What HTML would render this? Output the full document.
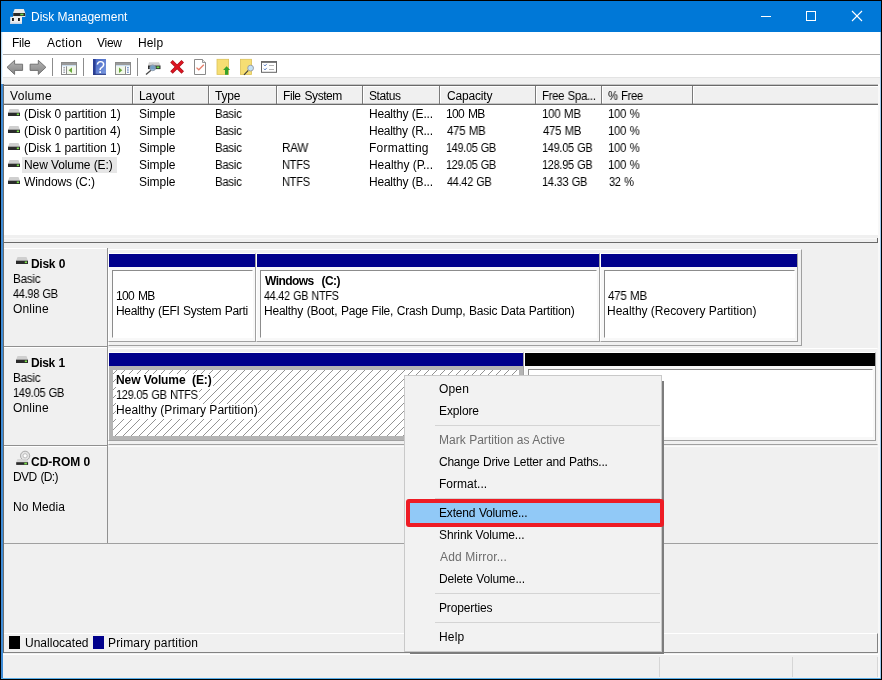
<!DOCTYPE html>
<html><head><meta charset="utf-8"><title>Disk Management</title>
<style>
html,body{margin:0;padding:0;}
body{width:882px;height:680px;overflow:hidden;background:#f0f0f0;position:relative;font-family:"Liberation Sans", Arial, sans-serif;font-size:12px;color:#000;}
.r{position:absolute;box-sizing:border-box;}
.t{position:absolute;white-space:pre;line-height:16px;height:16px;will-change:transform;}
svg{position:absolute;overflow:visible;}
</style></head><body>
<div class="r" style="left:0px;top:0px;width:882px;height:680px;background:#000;"></div>
<div class="r" style="left:1px;top:1px;width:880px;height:678px;background:#0078d7;"></div>
<div class="r" style="left:3px;top:32px;width:877px;height:646px;background:#f0f0f0;"></div>
<div class="r" style="left:880px;top:32px;width:1px;height:646px;background:#9ccbf0;"></div>
<div class="r" style="left:1px;top:32px;width:1px;height:52px;background:#b5d9f5;"></div>
<div class="r" style="left:2px;top:32px;width:1px;height:52px;background:#eef6fd;"></div>
<div class="r" style="left:1px;top:84px;width:2px;height:594px;background:#3f8cd6;"></div>
<div class="r" style="left:1px;top:678px;width:880px;height:1px;background:#5aaee8;"></div>
<span class="t" style="left:30.7px;top:9px;font-size:12px;letter-spacing:-0.025px;color:#fff;">Disk Management</span>
<svg style="left:755px;top:5px" width="120" height="22" viewBox="755 5 120 22"><g stroke="#fff" stroke-width="1" fill="none" shape-rendering="crispEdges"><line x1="761" y1="16.5" x2="771" y2="16.5"/><rect x="806.5" y="11.5" width="9" height="9"/></g><g stroke="#fff" stroke-width="1.1" fill="none"><line x1="852" y1="11" x2="862" y2="21"/><line x1="862" y1="11" x2="852" y2="21"/></g></svg>
<div class="r" style="left:3px;top:32px;width:877px;height:22px;background:#fff;"></div>
<div class="r" style="left:3px;top:54px;width:877px;height:1px;background:#a8a8a8;"></div>
<span class="t" style="left:12.0px;top:35px;font-size:12px;letter-spacing:-0.209px;">File</span>
<span class="t" style="left:46.5px;top:35px;font-size:12px;letter-spacing:0.309px;">Action</span>
<span class="t" style="left:96.9px;top:35px;font-size:12px;letter-spacing:-0.258px;">View</span>
<span class="t" style="left:138.2px;top:35px;font-size:12px;letter-spacing:0.134px;">Help</span>
<div class="r" style="left:3px;top:55px;width:877px;height:22px;background:#fff;"></div>
<div class="r" style="left:3px;top:77px;width:877px;height:1px;background:#e3e3e3;"></div>
<div class="r" style="left:3px;top:84px;width:875px;height:151px;background:#fff;border-left:1px solid #6d6d6d;"></div>
<div class="r" style="left:4px;top:84px;width:874px;height:21px;background:#f0f0f0;"></div>
<div class="r" style="left:4px;top:84px;width:874px;height:1px;background:#c4c4c4;"></div>
<div class="r" style="left:4px;top:85px;width:874px;height:1px;background:#6a6a6a;"></div>
<div class="r" style="left:4px;top:86px;width:874px;height:1px;background:#fff;"></div>
<div class="r" style="left:4px;top:103px;width:874px;height:1px;background:#c4c4c4;"></div>
<div class="r" style="left:4px;top:104px;width:874px;height:1px;background:#6a6a6a;"></div>
<div class="r" style="left:132px;top:86px;width:1px;height:18px;background:#7a7a7a;"></div>
<div class="r" style="left:133px;top:86px;width:1px;height:17px;background:#fff;"></div>
<div class="r" style="left:208px;top:86px;width:1px;height:18px;background:#7a7a7a;"></div>
<div class="r" style="left:209px;top:86px;width:1px;height:17px;background:#fff;"></div>
<div class="r" style="left:276px;top:86px;width:1px;height:18px;background:#7a7a7a;"></div>
<div class="r" style="left:277px;top:86px;width:1px;height:17px;background:#fff;"></div>
<div class="r" style="left:362px;top:86px;width:1px;height:18px;background:#7a7a7a;"></div>
<div class="r" style="left:363px;top:86px;width:1px;height:17px;background:#fff;"></div>
<div class="r" style="left:439px;top:86px;width:1px;height:18px;background:#7a7a7a;"></div>
<div class="r" style="left:440px;top:86px;width:1px;height:17px;background:#fff;"></div>
<div class="r" style="left:535px;top:86px;width:1px;height:18px;background:#7a7a7a;"></div>
<div class="r" style="left:536px;top:86px;width:1px;height:17px;background:#fff;"></div>
<div class="r" style="left:601px;top:86px;width:1px;height:18px;background:#7a7a7a;"></div>
<div class="r" style="left:602px;top:86px;width:1px;height:17px;background:#fff;"></div>
<div class="r" style="left:692px;top:86px;width:1px;height:18px;background:#7a7a7a;"></div>
<div class="r" style="left:693px;top:86px;width:1px;height:17px;background:#fff;"></div>
<span class="t" style="left:9.9px;top:88px;font-size:12px;letter-spacing:0.311px;">Volume</span>
<span class="t" style="left:139.0px;top:88px;font-size:12px;letter-spacing:-0.072px;">Layout</span>
<span class="t" style="left:215.2px;top:88px;font-size:12px;letter-spacing:-0.238px;">Type</span>
<span class="t" style="left:282.7px;top:88px;font-size:12px;letter-spacing:-0.431px;word-spacing:0.99px;">File System</span>
<span class="t" style="left:369.1px;top:88px;font-size:12px;letter-spacing:-0.411px;">Status</span>
<span class="t" style="left:446.6px;top:88px;font-size:12px;letter-spacing:-0.179px;">Capacity</span>
<span class="t" style="left:542.1px;top:88px;font-size:12px;letter-spacing:-0.300px;word-spacing:0.60px;transform:scaleX(0.9473);transform-origin:0 0;">Free Spa...</span>
<span class="t" style="left:608.3px;top:88px;font-size:12px;letter-spacing:-0.300px;word-spacing:0.60px;transform:scaleX(0.9314);transform-origin:0 0;">% Free</span>
<div class="r" style="left:22px;top:157px;width:95px;height:16px;background:#e6e6e6;"></div>
<span class="t" style="left:23.8px;top:106px;font-size:12px;letter-spacing:-0.036px;">(Disk 0 partition 1)</span>
<span class="t" style="left:138.7px;top:106px;font-size:12px;letter-spacing:-0.042px;">Simple</span>
<span class="t" style="left:214.6px;top:106px;font-size:12px;letter-spacing:-0.300px;transform:scaleX(0.9500);transform-origin:0 0;">Basic</span>
<span class="t" style="left:368.5px;top:106px;font-size:12px;letter-spacing:-0.214px;word-spacing:0.51px;">Healthy (E...</span>
<span class="t" style="left:446.3px;top:106px;font-size:12px;letter-spacing:-0.642px;word-spacing:1.20px;">100 MB</span>
<span class="t" style="left:542.1px;top:106px;font-size:12px;letter-spacing:-0.300px;word-spacing:0.60px;transform:scaleX(0.9637);transform-origin:0 0;">100 MB</span>
<span class="t" style="left:608.1px;top:106px;font-size:12px;letter-spacing:-0.300px;word-spacing:0.60px;transform:scaleX(0.9505);transform-origin:0 0;">100 %</span>
<svg style="left:8px;top:109px" width="12" height="7" viewBox="0 0 12 7"><path d="M1.5 0H10.5L12 4H0Z" fill="#cfcfcf"/><rect x="0" y="3.7" width="12" height="3.3" fill="#2b2b2b"/><rect x="8.8" y="4.5" width="2.2" height="1.6" fill="#7be04a"/></svg>
<span class="t" style="left:23.8px;top:123px;font-size:12px;letter-spacing:-0.036px;">(Disk 0 partition 4)</span>
<span class="t" style="left:138.7px;top:123px;font-size:12px;letter-spacing:-0.042px;">Simple</span>
<span class="t" style="left:214.6px;top:123px;font-size:12px;letter-spacing:-0.300px;transform:scaleX(0.9500);transform-origin:0 0;">Basic</span>
<span class="t" style="left:368.5px;top:123px;font-size:12px;letter-spacing:-0.282px;word-spacing:0.68px;">Healthy (R...</span>
<span class="t" style="left:446.9px;top:123px;font-size:12px;letter-spacing:-0.300px;word-spacing:0.60px;transform:scaleX(0.9557);transform-origin:0 0;">475 MB</span>
<span class="t" style="left:542.7px;top:123px;font-size:12px;letter-spacing:-0.300px;word-spacing:0.60px;transform:scaleX(0.9481);transform-origin:0 0;">475 MB</span>
<span class="t" style="left:608.1px;top:123px;font-size:12px;letter-spacing:-0.300px;word-spacing:0.60px;transform:scaleX(0.9505);transform-origin:0 0;">100 %</span>
<svg style="left:8px;top:126px" width="12" height="7" viewBox="0 0 12 7"><path d="M1.5 0H10.5L12 4H0Z" fill="#cfcfcf"/><rect x="0" y="3.7" width="12" height="3.3" fill="#2b2b2b"/><rect x="8.8" y="4.5" width="2.2" height="1.6" fill="#7be04a"/></svg>
<span class="t" style="left:23.8px;top:140px;font-size:12px;letter-spacing:-0.036px;">(Disk 1 partition 1)</span>
<span class="t" style="left:138.7px;top:140px;font-size:12px;letter-spacing:-0.042px;">Simple</span>
<span class="t" style="left:214.6px;top:140px;font-size:12px;letter-spacing:-0.300px;transform:scaleX(0.9500);transform-origin:0 0;">Basic</span>
<span class="t" style="left:282.2px;top:140px;font-size:12px;letter-spacing:-0.300px;transform:scaleX(0.9793);transform-origin:0 0;">RAW</span>
<span class="t" style="left:368.5px;top:140px;font-size:12px;letter-spacing:0.244px;">Formatting</span>
<span class="t" style="left:446.4px;top:140px;font-size:12px;letter-spacing:-0.300px;word-spacing:0.60px;transform:scaleX(0.9032);transform-origin:0 0;">149.05 GB</span>
<span class="t" style="left:542.2px;top:140px;font-size:12px;letter-spacing:-0.300px;word-spacing:0.60px;transform:scaleX(0.9125);transform-origin:0 0;">149.05 GB</span>
<span class="t" style="left:608.1px;top:140px;font-size:12px;letter-spacing:-0.300px;word-spacing:0.60px;transform:scaleX(0.9505);transform-origin:0 0;">100 %</span>
<svg style="left:8px;top:143px" width="12" height="7" viewBox="0 0 12 7"><path d="M1.5 0H10.5L12 4H0Z" fill="#cfcfcf"/><rect x="0" y="3.7" width="12" height="3.3" fill="#2b2b2b"/><rect x="8.8" y="4.5" width="2.2" height="1.6" fill="#7be04a"/></svg>
<span class="t" style="left:23.5px;top:157px;font-size:12px;letter-spacing:-0.093px;">New Volume (E:)</span>
<span class="t" style="left:138.7px;top:157px;font-size:12px;letter-spacing:-0.042px;">Simple</span>
<span class="t" style="left:214.6px;top:157px;font-size:12px;letter-spacing:-0.300px;transform:scaleX(0.9500);transform-origin:0 0;">Basic</span>
<span class="t" style="left:282.3px;top:157px;font-size:12px;letter-spacing:-0.300px;transform:scaleX(0.9201);transform-origin:0 0;">NTFS</span>
<span class="t" style="left:368.5px;top:157px;font-size:12px;letter-spacing:-0.042px;">Healthy (P...</span>
<span class="t" style="left:446.4px;top:157px;font-size:12px;letter-spacing:-0.300px;word-spacing:0.60px;transform:scaleX(0.9032);transform-origin:0 0;">129.05 GB</span>
<span class="t" style="left:542.2px;top:157px;font-size:12px;letter-spacing:-0.300px;word-spacing:0.60px;transform:scaleX(0.9125);transform-origin:0 0;">128.95 GB</span>
<span class="t" style="left:608.1px;top:157px;font-size:12px;letter-spacing:-0.300px;word-spacing:0.60px;transform:scaleX(0.9505);transform-origin:0 0;">100 %</span>
<svg style="left:8px;top:160px" width="12" height="7" viewBox="0 0 12 7"><path d="M1.5 0H10.5L12 4H0Z" fill="#cfcfcf"/><rect x="0" y="3.7" width="12" height="3.3" fill="#2b2b2b"/><rect x="8.8" y="4.5" width="2.2" height="1.6" fill="#7be04a"/></svg>
<span class="t" style="left:24.4px;top:174px;font-size:12px;letter-spacing:-0.102px;">Windows (C:)</span>
<span class="t" style="left:138.7px;top:174px;font-size:12px;letter-spacing:-0.042px;">Simple</span>
<span class="t" style="left:214.6px;top:174px;font-size:12px;letter-spacing:-0.300px;transform:scaleX(0.9500);transform-origin:0 0;">Basic</span>
<span class="t" style="left:282.3px;top:174px;font-size:12px;letter-spacing:-0.300px;transform:scaleX(0.9201);transform-origin:0 0;">NTFS</span>
<span class="t" style="left:368.5px;top:174px;font-size:12px;letter-spacing:-0.214px;word-spacing:0.51px;">Healthy (B...</span>
<span class="t" style="left:447.0px;top:174px;font-size:12px;letter-spacing:-0.300px;word-spacing:0.60px;transform:scaleX(0.9069);transform-origin:0 0;">44.42 GB</span>
<span class="t" style="left:542.2px;top:174px;font-size:12px;letter-spacing:-0.300px;word-spacing:0.60px;transform:scaleX(0.9212);transform-origin:0 0;">14.33 GB</span>
<span class="t" style="left:608.6px;top:174px;font-size:12px;letter-spacing:-0.300px;word-spacing:0.60px;transform:scaleX(0.9169);transform-origin:0 0;">32 %</span>
<svg style="left:8px;top:177px" width="12" height="7" viewBox="0 0 12 7"><path d="M1.5 0H10.5L12 4H0Z" fill="#cfcfcf"/><rect x="0" y="3.7" width="12" height="3.3" fill="#2b2b2b"/><rect x="8.8" y="4.5" width="2.2" height="1.6" fill="#7be04a"/></svg>
<div class="r" style="left:878px;top:84px;width:2px;height:594px;background:#f8f8f8;"></div>
<div class="r" style="left:3px;top:235px;width:875px;height:7px;background:#f0f0f0;"></div>
<div class="r" style="left:4px;top:238px;width:873px;height:1px;background:#f8f8f8;"></div>
<div class="r" style="left:3px;top:242px;width:875px;height:1px;background:#696969;"></div>
<div class="r" style="left:877px;top:238px;width:1px;height:5px;background:#696969;"></div>
<div class="r" style="left:3px;top:84px;width:1px;height:569px;background:#6d6d6d;"></div>
<div class="r" style="left:4px;top:248px;width:103px;height:98px;background:#f0f0f0;border-top:1px solid #fff;"></div>
<div class="r" style="left:107px;top:248px;width:1px;height:99px;background:#909090;"></div>
<div class="r" style="left:4px;top:346px;width:104px;height:1px;background:#909090;"></div>
<div class="r" style="left:4px;top:347px;width:103px;height:98px;background:#f0f0f0;border-top:1px solid #fff;"></div>
<div class="r" style="left:107px;top:347px;width:1px;height:99px;background:#909090;"></div>
<div class="r" style="left:4px;top:445px;width:104px;height:1px;background:#909090;"></div>
<div class="r" style="left:4px;top:446px;width:103px;height:97px;background:#f0f0f0;border-top:1px solid #fff;"></div>
<div class="r" style="left:107px;top:446px;width:1px;height:98px;background:#909090;"></div>
<div class="r" style="left:4px;top:543px;width:104px;height:1px;background:#909090;"></div>
<div class="r" style="left:4px;top:543px;width:874px;height:1px;background:#a0a0a0;"></div>
<svg style="left:16px;top:257px" width="12" height="7" viewBox="0 0 12 7"><path d="M1.5 0H10.5L12 4H0Z" fill="#cfcfcf"/><rect x="0" y="3.7" width="12" height="3.3" fill="#2b2b2b"/><rect x="8.8" y="4.5" width="2.2" height="1.6" fill="#7be04a"/></svg>
<svg style="left:16px;top:356px" width="12" height="7" viewBox="0 0 12 7"><path d="M1.5 0H10.5L12 4H0Z" fill="#cfcfcf"/><rect x="0" y="3.7" width="12" height="3.3" fill="#2b2b2b"/><rect x="8.8" y="4.5" width="2.2" height="1.6" fill="#7be04a"/></svg>
<span class="t" style="left:31.0px;top:256px;font-size:12px;letter-spacing:-0.309px;word-spacing:0.58px;font-weight:700;">Disk 0</span>
<span class="t" style="left:12.5px;top:271px;font-size:12px;letter-spacing:-0.300px;transform:scaleX(0.9760);transform-origin:0 0;">Basic</span>
<span class="t" style="left:13.2px;top:286px;font-size:12px;letter-spacing:-0.300px;word-spacing:0.60px;transform:scaleX(0.9131);transform-origin:0 0;">44.98 GB</span>
<span class="t" style="left:12.9px;top:301px;font-size:12px;letter-spacing:0.183px;">Online</span>
<span class="t" style="left:31.0px;top:355px;font-size:12px;letter-spacing:-0.359px;word-spacing:0.67px;font-weight:700;">Disk 1</span>
<span class="t" style="left:12.5px;top:370px;font-size:12px;letter-spacing:-0.300px;transform:scaleX(0.9760);transform-origin:0 0;">Basic</span>
<span class="t" style="left:12.7px;top:385px;font-size:12px;letter-spacing:-0.300px;word-spacing:0.60px;transform:scaleX(0.9254);transform-origin:0 0;">149.05 GB</span>
<span class="t" style="left:12.9px;top:400px;font-size:12px;letter-spacing:0.183px;">Online</span>
<span class="t" style="left:31.3px;top:454px;font-size:12px;letter-spacing:-0.023px;font-weight:700;">CD-ROM 0</span>
<span class="t" style="left:12.5px;top:469px;font-size:12px;letter-spacing:-0.620px;word-spacing:1.20px;">DVD (D:)</span>
<span class="t" style="left:12.5px;top:499px;font-size:12px;letter-spacing:0.075px;">No Media</span>
<div class="r" style="left:108px;top:249px;width:694px;height:97px;background:#f0f0f0;border:1px solid #fff;border-right-color:#a0a0a0;border-bottom-color:#a0a0a0;"></div>
<div class="r" style="left:108px;top:253px;width:148px;height:89px;background:#f8f8f8;border:1px solid #fff;border-right-color:#a0a0a0;border-bottom-color:#a0a0a0;"></div>
<div class="r" style="left:109px;top:254px;width:146px;height:13px;background:#00008b;"></div>
<div class="r" style="left:112px;top:270px;width:141px;height:68px;background:#fff;border:1px solid #8c8c8c;border-right-color:#fff;border-bottom-color:#fff;"></div>
<div class="r" style="left:256px;top:253px;width:344px;height:89px;background:#f8f8f8;border:1px solid #fff;border-right-color:#a0a0a0;border-bottom-color:#a0a0a0;"></div>
<div class="r" style="left:257px;top:254px;width:342px;height:13px;background:#00008b;"></div>
<div class="r" style="left:260px;top:270px;width:337px;height:68px;background:#fff;border:1px solid #8c8c8c;border-right-color:#fff;border-bottom-color:#fff;"></div>
<div class="r" style="left:600px;top:253px;width:198px;height:89px;background:#f8f8f8;border:1px solid #fff;border-right-color:#a0a0a0;border-bottom-color:#a0a0a0;"></div>
<div class="r" style="left:601px;top:254px;width:196px;height:13px;background:#00008b;"></div>
<div class="r" style="left:604px;top:270px;width:191px;height:68px;background:#fff;border:1px solid #8c8c8c;border-right-color:#fff;border-bottom-color:#fff;"></div>
<div class="r" style="left:108px;top:348px;width:770px;height:97px;background:#f0f0f0;border:1px solid #fff;border-right-color:#f4f4f4;border-bottom-color:#a0a0a0;"></div>
<div class="r" style="left:108px;top:352px;width:416px;height:89px;background:#f8f8f8;border:1px solid #fff;border-right-color:#a0a0a0;border-bottom-color:#a0a0a0;"></div>
<div class="r" style="left:109px;top:353px;width:414px;height:13px;background:#00008b;"></div>
<div class="r" style="left:109px;top:366px;width:414px;height:74px;background:#fff;border:4px solid #b4b4b4;"></div>
<div class="r" style="left:524px;top:352px;width:352px;height:89px;background:#f8f8f8;border:1px solid #fff;border-right-color:#a0a0a0;border-bottom-color:#a0a0a0;"></div>
<div class="r" style="left:525px;top:353px;width:350px;height:13px;background:#000;"></div>
<div class="r" style="left:528px;top:369px;width:345px;height:68px;background:#fff;border:1px solid #8c8c8c;border-right-color:#fff;border-bottom-color:#fff;"></div>
<svg style="left:113px;top:370px" width="406" height="66"><defs><pattern id="h" width="8" height="8" patternUnits="userSpaceOnUse"><path d="M-1 5L5 -1M3 9L9 3" stroke="#808080" stroke-width="0.85" fill="none"/></pattern></defs><rect width="406" height="66" fill="url(#h)"/></svg>
<span class="t" style="left:115.9px;top:288px;font-size:12px;letter-spacing:-0.643px;word-spacing:1.20px;">100 MB</span>
<div class="r" style="left:113px;top:302px;width:135px;height:18px;overflow:hidden">
<span class="t" style="left:2.8px;top:1px;font-size:12px;letter-spacing:-0.335px;word-spacing:0.73px;">Healthy (EFI System Partition)</span>
</div>
<span class="t" style="left:264.5px;top:273px;font-size:12px;letter-spacing:-0.558px;word-spacing:1.12px;font-weight:700;">Windows  (C:)</span>
<span class="t" style="left:264.3px;top:288px;font-size:12px;letter-spacing:-0.300px;word-spacing:0.60px;transform:scaleX(0.9020);transform-origin:0 0;">44.42 GB NTFS</span>
<span class="t" style="left:263.5px;top:303px;font-size:12px;letter-spacing:-0.229px;word-spacing:0.49px;">Healthy (Boot, Page File, Crash Dump, Basic Data Partition)</span>
<span class="t" style="left:608.1px;top:288px;font-size:12px;letter-spacing:-0.300px;word-spacing:0.60px;transform:scaleX(0.9658);transform-origin:0 0;">475 MB</span>
<span class="t" style="left:607.2px;top:303px;font-size:12px;letter-spacing:-0.020px;">Healthy (Recovery Partition)</span>
<div class="r" style="left:116px;top:374px;width:96.5px;height:15px;background:#fff;"></div>
<div class="r" style="left:116px;top:389px;width:82.5px;height:15px;background:#fff;"></div>
<div class="r" style="left:116px;top:404px;width:141.5px;height:15px;background:#fff;"></div>
<span class="t" style="left:115.9px;top:372px;font-size:12px;letter-spacing:-0.095px;font-weight:700;">New Volume  (E:)</span>
<span class="t" style="left:115.9px;top:387px;font-size:12px;letter-spacing:-0.300px;word-spacing:0.60px;transform:scaleX(0.9171);transform-origin:0 0;">129.05 GB NTFS</span>
<span class="t" style="left:115.7px;top:402px;font-size:12px;letter-spacing:0.039px;">Healthy (Primary Partition)</span>
<div class="r" style="left:4px;top:633px;width:874px;height:20px;background:#f0f0f0;border-top:1px solid #fff;border-bottom:1px solid #828282;border-right:1px solid #828282;"></div>
<div class="r" style="left:9px;top:636px;width:11px;height:13px;background:#000;"></div>
<div class="r" style="left:93px;top:636px;width:11px;height:13px;background:#00008b;"></div>
<span class="t" style="left:24.6px;top:635px;font-size:12px;letter-spacing:0.012px;">Unallocated</span>
<span class="t" style="left:108.3px;top:635px;font-size:12px;letter-spacing:0.163px;">Primary partition</span>
<div class="r" style="left:3px;top:653px;width:875px;height:1px;background:#f0f0f0;"></div>
<div class="r" style="left:3px;top:654px;width:875px;height:1px;background:#fff;"></div>
<div class="r" style="left:3px;top:655px;width:875px;height:23px;background:#f0f0f0;"></div>
<div class="r" style="left:108px;top:446px;width:770px;height:1px;background:#fbfbfb;"></div>
<div class="r" style="left:662px;top:381px;width:2px;height:273px;background:#7d7d7d;"></div>
<div class="r" style="left:410px;top:652px;width:254px;height:2px;background:#7d7d7d;"></div>
<div class="r" style="left:404px;top:375px;width:258px;height:277px;background:#f2f2f2;border:1px solid #c9c9c9;"></div>
<div class="r" style="left:435px;top:425px;width:225px;height:1px;background:#d4d4d4;"></div>
<div class="r" style="left:435px;top:498px;width:225px;height:1px;background:#d4d4d4;"></div>
<div class="r" style="left:435px;top:593px;width:225px;height:1px;background:#d4d4d4;"></div>
<div class="r" style="left:435px;top:622px;width:225px;height:1px;background:#d4d4d4;"></div>
<div class="r" style="left:410px;top:503px;width:250px;height:20px;background:#91c9f7;"></div>
<div class="r" style="left:406px;top:499px;width:258px;height:28px;background:transparent;border:4px solid #ee1c25;border-radius:3px;"></div>
<span class="t" style="left:438.9px;top:381px;font-size:12px;letter-spacing:0.163px;">Open</span>
<span class="t" style="left:438.5px;top:403px;font-size:12px;letter-spacing:-0.112px;">Explore</span>
<span class="t" style="left:438.5px;top:432px;font-size:12px;letter-spacing:0.027px;color:#6d6d6d;">Mark Partition as Active</span>
<span class="t" style="left:438.9px;top:454px;font-size:12px;letter-spacing:-0.267px;word-spacing:0.58px;">Change Drive Letter and Paths...</span>
<span class="t" style="left:438.5px;top:476px;font-size:12px;letter-spacing:0.008px;">Format...</span>
<span class="t" style="left:438.5px;top:505px;font-size:12px;letter-spacing:-0.172px;word-spacing:0.43px;">Extend Volume...</span>
<span class="t" style="left:439.0px;top:527px;font-size:12px;letter-spacing:-0.116px;">Shrink Volume...</span>
<span class="t" style="left:439.5px;top:549px;font-size:12px;letter-spacing:0.130px;color:#6d6d6d;">Add Mirror...</span>
<span class="t" style="left:438.5px;top:571px;font-size:12px;letter-spacing:-0.159px;word-spacing:0.40px;">Delete Volume...</span>
<span class="t" style="left:438.5px;top:600px;font-size:12px;letter-spacing:-0.132px;">Properties</span>
<span class="t" style="left:438.5px;top:629px;font-size:12px;letter-spacing:0.167px;">Help</span>
<svg style="left:0;top:55px;will-change:transform" width="290" height="23" viewBox="0 55 290 23">
<defs><linearGradient id="ga" x1="0" y1="0" x2="0" y2="1"><stop offset="0" stop-color="#b4b4b4"/><stop offset="1" stop-color="#858585"/></linearGradient>
<linearGradient id="gh" x1="0" y1="0" x2="1" y2="1"><stop offset="0" stop-color="#3f5fc0"/><stop offset="1" stop-color="#7d9be0"/></linearGradient></defs>
<path d="M7 67.3L14.6 60.3V64.2H22.6V70.4H14.6V74.4Z" fill="url(#ga)" stroke="#6a6a6a" stroke-width="0.9" stroke-linejoin="round"/>
<path d="M45.9 67.3L38.3 60.3V64.2H30.1V70.4H38.3V74.4Z" fill="url(#ga)" stroke="#6a6a6a" stroke-width="0.9" stroke-linejoin="round"/>
<g fill="#8c8c8c"><rect x="52" y="58" width="1" height="18"/><rect x="83" y="58" width="1" height="18"/><rect x="137" y="58" width="1" height="18"/></g>
<!-- show/hide tree -->
<g><rect x="61.5" y="62.5" width="15" height="12" fill="#fff" stroke="#8a8a8a"/><rect x="62" y="63" width="14" height="2.2" fill="#9a9a9a"/><rect x="62" y="65.3" width="14" height="1" fill="#bcd6ee"/><rect x="66" y="66.3" width="1" height="8" fill="#8a8a8a"/><rect x="67" y="66.5" width="9" height="7.5" fill="#f2f8ea"/>
<g fill="#7a8290"><rect x="63.3" y="67.3" width="1.8" height="1"/><rect x="63.3" y="69.5" width="1.8" height="1"/><rect x="63.3" y="71.7" width="1.8" height="1"/></g><path d="M72 67.6V73L68.6 70.3Z" fill="#6aa93c"/></g>
<!-- help -->
<g><rect x="93" y="59" width="13" height="15.8" fill="url(#gh)"/><rect x="93" y="59" width="2.6" height="15.8" fill="#2b3f95"/><rect x="93" y="73.8" width="13" height="1" fill="#25357d"/>
<text x="100.4" y="73.2" font-family="Liberation Sans, Arial, sans-serif" font-weight="400" font-size="16" fill="#fff" text-anchor="middle">?</text></g>
<!-- action pane -->
<g><rect x="115.5" y="62.5" width="15" height="12" fill="#fff" stroke="#8a8a8a"/><rect x="116" y="63" width="14" height="2.2" fill="#9a9a9a"/><rect x="116" y="65.3" width="14" height="1" fill="#bcd6ee"/><rect x="125" y="66.3" width="1" height="8" fill="#8a8a8a"/><rect x="116" y="66.5" width="9" height="7.5" fill="#f2f8ea"/>
<g fill="#4a6fb8"><rect x="127" y="67.3" width="1.8" height="1"/><rect x="127" y="69.5" width="1.8" height="1"/><rect x="127" y="71.7" width="1.8" height="1"/></g><path d="M119 67.6V73L122.3 70.3Z" fill="#6aa93c"/></g>
<!-- drive + magnifier -->
<g><path d="M149 62.2H159L160.5 65.6H148Z" fill="#cfcfcf"/><rect x="148" y="65.5" width="12.5" height="3.6" fill="#2e2e2e"/><rect x="156.6" y="66.4" width="2.8" height="1.8" fill="#69d84a"/>
<line x1="151" y1="70.2" x2="146" y2="74.6" stroke="#4a4a4a" stroke-width="1.3"/><circle cx="152.7" cy="67.8" r="2.9" fill="#7fb0dc" fill-opacity="0.85" stroke="#8a97a8" stroke-width="0.9"/></g>
<!-- red X -->
<path d="M172.7 62.4L181.5 71.2M181.5 62.4L172.7 71.2" stroke="#a80f18" stroke-width="3.5" stroke-linecap="square"/>
<path d="M172.7 62.4L181.5 71.2M181.5 62.4L172.7 71.2" stroke="#dd1522" stroke-width="2.3" stroke-linecap="square"/>
<!-- doc check -->
<g><path d="M194.5 59.5H202.5L205.5 62.5V74.5H194.5Z" fill="#fff" stroke="#8a8a8a"/><path d="M202.5 59.5V62.5H205.5" fill="#e8e8e8" stroke="#808080" stroke-width="0.8"/><path d="M196.5 67.6L198.8 69.8L203.8 64.8" fill="none" stroke="#e6806c" stroke-width="1.3"/></g>
<!-- yellow + arrow -->
<g><rect x="217" y="59.3" width="11.6" height="15.2" fill="#f6de73" stroke="#dcc25a" stroke-width="0.8"/><path d="M226.6 66.3L230.1 70H228.2V74.8H225V70H223.1Z" fill="#35a12b"/></g>
<!-- yellow + magnifier -->
<g><rect x="240.4" y="59.3" width="11.2" height="15.2" fill="#f6de73" stroke="#dcc25a" stroke-width="0.8"/><line x1="248.3" y1="70.4" x2="244" y2="74.8" stroke="#3c3c3c" stroke-width="1.2"/><circle cx="250.6" cy="68.1" r="2.9" fill="#c4e2f6" stroke="#9aa0a8" stroke-width="1"/></g>
<!-- list -->
<g><rect x="261.5" y="61.7" width="15" height="10.6" fill="#fff" stroke="#666"/><rect x="261" y="61.2" width="16" height="1.6" fill="#666"/>
<path d="M263.8 64.6L265 66L266.8 63.9M263.8 68.6L265 70L266.8 67.9" fill="none" stroke="#5a7fc4" stroke-width="0.9"/><g fill="#b4b4b4"><rect x="269" y="65" width="5" height="1"/><rect x="269" y="69" width="5" height="1"/></g></g>
</svg>
<svg style="left:8px;top:7px" width="20" height="20" viewBox="8 7 20 20">
<path d="M14.6 9H23.8L25.3 13.2V17H13V13.2Z" fill="#e9e9e9"/><rect x="13.2" y="13" width="11.9" height="3" fill="#2a2a2a"/><rect x="20.3" y="13.7" width="3.2" height="1.6" fill="#6fdc4c"/>
<rect x="10.2" y="16.8" width="11.8" height="7.2" fill="#efefef"/><rect x="10.2" y="22.5" width="11.8" height="1.5" fill="#c8d6e6"/><rect x="12" y="18" width="1.9" height="3" fill="#1a1a1a"/><rect x="18" y="18" width="1.9" height="3" fill="#1a1a1a"/></svg>
<svg style="left:14px;top:449px" width="18" height="18" viewBox="14 449 18 18">
<circle cx="25.1" cy="455.8" r="4.6" fill="#e4e4e4" stroke="#a2a2a2" stroke-width="0.9"/><circle cx="25.1" cy="455.8" r="2.1" fill="#fff" stroke="#b0b0b0" stroke-width="0.8"/>
<path d="M17.5 459H27L28.2 462.3H16.2Z" fill="#d4d4d4" opacity="0.9"/><rect x="16.2" y="462.2" width="11.9" height="2.7" fill="#2a2a2a"/><rect x="24.3" y="462.7" width="2.6" height="1.7" fill="#7be04a"/></svg>
<div class="r" style="left:659px;top:657px;width:1px;height:20px;background:#d6d6d6;"></div>
<div class="r" style="left:792px;top:657px;width:1px;height:20px;background:#d6d6d6;"></div>
<div class="r" style="left:877px;top:657px;width:1px;height:20px;background:#d6d6d6;"></div>
</body></html>
